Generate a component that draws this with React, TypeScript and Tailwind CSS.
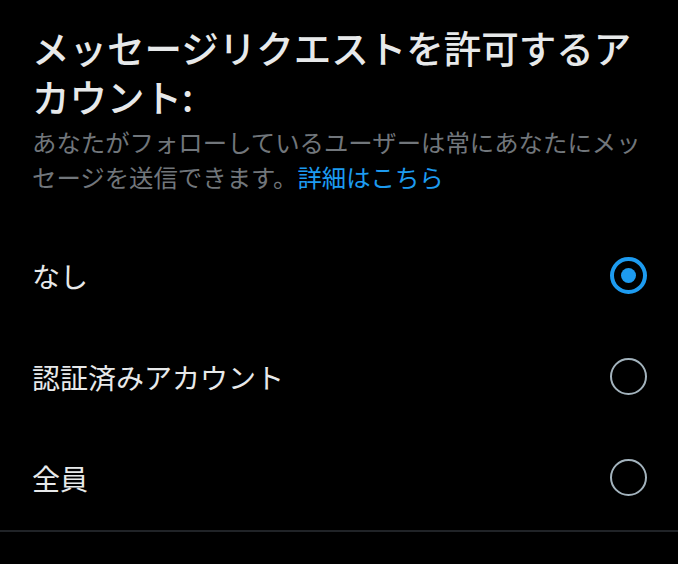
const options = [
  { label: 'なし', selected: true },
  { label: '認証済みアカウント', selected: false },
  { label: '全員', selected: false },
]

function Radio({ selected }: { selected: boolean }) {
  if (selected) {
    return (
      <span className="flex h-[37px] w-[37px] items-center justify-center rounded-full border-[4px] border-[#1d9bf0]">
        <span className="h-[15px] w-[15px] rounded-full bg-[#1d9bf0]" />
      </span>
    )
  }
  return <span className="h-[37px] w-[37px] rounded-full border-2 border-[#a3b3bd]" />
}

export default function App() {
  return (
    <div
      className="h-[564px] w-[678px] overflow-hidden bg-black"
      style={{ fontFamily: '"Noto Sans CJK JP", "Noto Sans", sans-serif' }}
    >
      <div className="px-8 pt-[22px]">
        <h1 className="text-[37.5px] font-medium leading-[49px] text-[#e7e9ea]">
          メッセージリクエストを許可するアカウント:
        </h1>
        <p className="mt-[4px] text-[24.4px] leading-[35px] text-[#71767b]">
          あなたがフォローしているユーザーは常にあなたにメッセージを送信できます。
          <span className="text-[#1d9bf0]">詳細はこちら</span>
        </p>
      </div>
      <ul className="mt-[31px]">
        {options.map((o) => (
          <li key={o.label} className="flex h-[101px] items-center justify-between pl-8 pr-[31px]">
            <span className="text-[28px] text-[#e7e9ea]">{o.label}</span>
            <Radio selected={o.selected} />
          </li>
        ))}
      </ul>
      <div className="mt-[2px] border-t-2 border-[#202327]" />
    </div>
  )
}
